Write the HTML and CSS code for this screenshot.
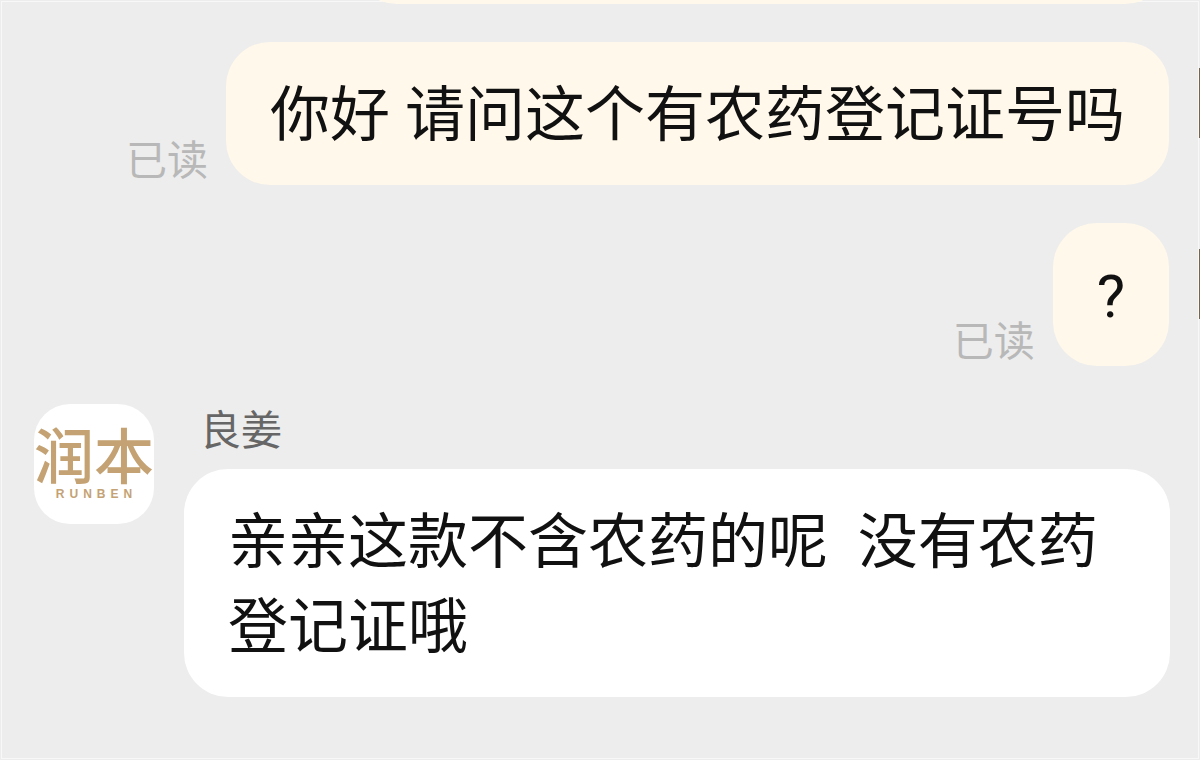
FILE: index.html
```html
<!DOCTYPE html>
<html lang="zh-CN">
<head>
    <meta charset="UTF-8">
    <meta name="viewport" content="width=device-width, initial-scale=1.0">
    <title>良姜</title>
    <link rel="stylesheet" href="styles.css">
</head>
<body>
    <main class="chat">
        <div class="row sent">
            <div class="bubble previous"></div>
        </div>
        <div class="row sent">
            <span class="status">已读</span>
            <div class="bubble">你好 请问这个有农药登记证号吗</div>
            <div class="user"></div>
        </div>
        <div class="row sent">
            <span class="status">已读</span>
            <div class="bubble">?</div>
            <div class="user"></div>
        </div>
        <div class="row received">
            <div class="shop">
                <span class="brand">润本</span>
                <span class="brand-en">RUNBEN</span>
            </div>
            <div class="message">
                <div class="name">良姜</div>
                <div class="bubble">亲亲这款不含农药的呢  没有农药登记证哦</div>
            </div>
        </div>
    </main>
</body>
</html>
```
FILE: styles.css
```css
* {
    box-sizing: border-box;
}
body {
    margin: 0;
    background: #ededed;
    font-family: "Noto Sans CJK SC", sans-serif;
}
.chat {
    display: flex;
    flex-direction: column;
    gap: 38px;
    min-height: 100vh;
    overflow: hidden;
    box-shadow: inset 0 0 0 1px #ededed, inset 0 0 0 2px #f8f8f8;
}
.row {
    display: flex;
    align-items: flex-start;
}
.sent {
    justify-content: flex-end;
}
.bubble {
    padding: 31px 44px 27px;
    border-radius: 44px;
    background: #fff;
    color: #111;
    font-family: Roboto, "Noto Sans CJK SC", sans-serif;
    font-size: 60px;
    line-height: 85px;
    white-space: pre-wrap;
}
.sent .bubble {
    background: #fff8eb;
}
/* end of the message scrolled off the top */
.sent .previous {
    width: 68%;
    height: 143px;
    margin: -139px 31px 0 0;
}
.status {
    align-self: flex-end;
    margin-right: 18px;
    color: #b8b8b8;
    font-size: 41px;
    line-height: 56px;
}
/* edge of the user's avatar */
.user {
    flex: none;
    width: 1px;
    height: 70px;
    margin: 26px 0 0 30px;
    background: #75664f;
}
.received {
    padding: 0 30px 0 34px;
    gap: 30px;
}
.shop {
    flex: none;
    display: flex;
    flex-direction: column;
    align-items: center;
    width: 120px;
    height: 120px;
    padding-top: 18px;
    border-radius: 36px;
    background: #fff;
    color: #c4a273;
}
.brand {
    font-size: 60px;
    line-height: 62px;
}
.brand-en {
    padding: 4px 0 0 5px;
    font-family: "Liberation Sans", sans-serif;
    font-size: 12px;
    font-weight: bold;
    line-height: 12px;
    letter-spacing: 5px;
}
.brand {
    font-weight: 500;
}
.message {
    flex: 1;
}
.name {
    padding: 0 16px 19px;
    color: #666;
    font-size: 41px;
    line-height: 46px;
}
```
